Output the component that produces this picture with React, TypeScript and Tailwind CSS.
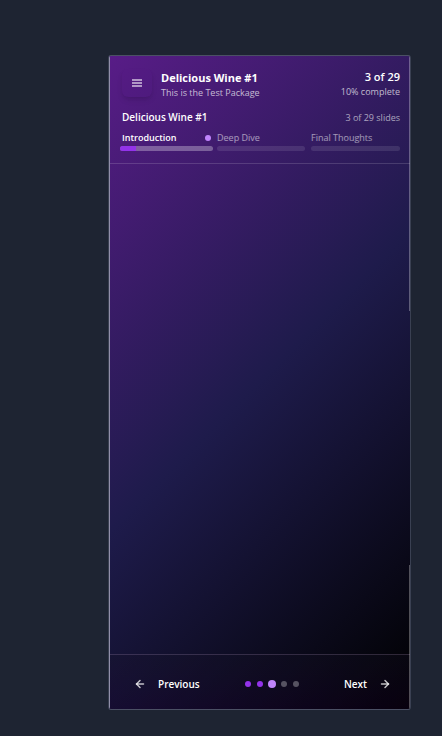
import { ArrowLeft, ArrowRight } from "lucide-react";

const sections = [
  { name: "Introduction", active: true },
  { name: "Deep Dive", active: false },
  { name: "Final Thoughts", active: false },
];

const dots = [
  "size-1.5 bg-[#9333ea]",
  "size-1.5 bg-[#9333ea]",
  "-mx-px size-2 bg-[#c084fc]",
  "size-1.5 bg-white/30",
  "size-1.5 bg-white/30",
];

function Section({ name, active }: { name: string; active: boolean }) {
  return (
    <li className={active ? "" : "last:mr-0 mr-0.5"}>
      <div className="flex h-4 items-center justify-between pr-0.5">
        <span
          className={
            active
              ? "pl-0.5 text-[9px] font-semibold whitespace-nowrap text-white"
              : "text-[9px] font-medium whitespace-nowrap text-white/55"
          }
        >
          {name}
        </span>
        {active && <span className="size-1.5 rounded-full bg-[#c084fc]" />}
      </div>
      <div
        className={
          active
            ? "h-[5px] overflow-hidden rounded-full bg-white/30"
            : "h-[5px] overflow-hidden rounded-full bg-white/10"
        }
      >
        {active && <div className="h-full w-[17%] bg-[#9333ea]" />}
      </div>
    </li>
  );
}

export default function App() {
  return (
    <div className="flex min-h-screen flex-col bg-[#1e2432] pt-[55px] pr-[31px] pb-[26px] pl-[108px] font-['Open_Sans','Noto_Sans',sans-serif] text-white">
      <main className="relative flex flex-1 flex-col overflow-hidden rounded-[3px] border border-[#4b5064] border-x-[#3a4052] bg-[linear-gradient(135deg,#581c87,#1e1b4b_50%,#000)]">
        <header className="border-b border-white/15 pt-3 pr-2.5 pb-3 pl-[11px]">
          <div className="flex items-start">
            <button
              type="button"
              aria-label="Open menu"
              className="mt-px ml-0.5 flex h-7 w-[30px] items-center justify-center rounded-md bg-purple-900/10 shadow-md shadow-black/10"
            >
              <svg viewBox="0 0 10 8" className="h-2 w-2.5 fill-white/55">
                <path d="M0 0h10v2H0zM0 3h10v2H0zM0 6h10v2H0z" />
              </svg>
            </button>
            <div className="mt-0.5 ml-[9px] flex-1 whitespace-nowrap">
              <h1 className="text-[11px] leading-4 font-bold">Delicious Wine #1</h1>
              <p className="text-[9px] leading-3.5 text-white/70">This is the Test Package</p>
            </div>
            <div className="mt-px text-right whitespace-nowrap">
              <p className="text-[11px] leading-4 font-semibold">3 of 29</p>
              <p className="text-[9px] leading-3.5 text-white/70">10% complete</p>
            </div>
          </div>
          <div className="mt-[9px] flex h-4 items-end justify-between pl-0.5">
            <h2 className="text-[10px] leading-4 font-semibold">Delicious Wine #1</h2>
            <span className="text-[9px] leading-3.5 text-white/60">3 of 29 slides</span>
          </div>
          <ul className="mt-[5px] grid grid-cols-[93fr_90fr_89fr] gap-1">
            {sections.map((s) => (
              <Section key={s.name} name={s.name} active={s.active} />
            ))}
          </ul>
        </header>

        <section aria-label="Slide" className="flex-1" />

        <footer className="flex h-[55px] items-center justify-between border-t border-white/15 bg-linear-to-t from-[#20003a]/25 to-[#181428]/25 pt-1 pr-[19px] pl-[25px]">
          <button type="button" className="flex items-center gap-3 text-[10px] font-semibold">
            <ArrowLeft strokeWidth={3} className="size-3 text-white/75" />
            Previous
          </button>
          <div className="flex h-2 items-center gap-1.5">
            {dots.map((dot, i) => (
              <span key={i} className={`rounded-full ${dot}`} />
            ))}
          </div>
          <button type="button" className="flex items-center gap-3 text-[10px] font-semibold">
            Next
            <ArrowRight strokeWidth={3} className="size-3 text-white/75" />
          </button>
        </footer>

        <span className="absolute inset-y-0 left-0 w-px bg-[#918ea8]" />
        <span className="absolute top-0 right-0 h-[39%] w-px bg-white/30" />
        <span className="absolute right-0 bottom-0 h-[22%] w-px bg-white/30" />
      </main>
    </div>
  );
}
